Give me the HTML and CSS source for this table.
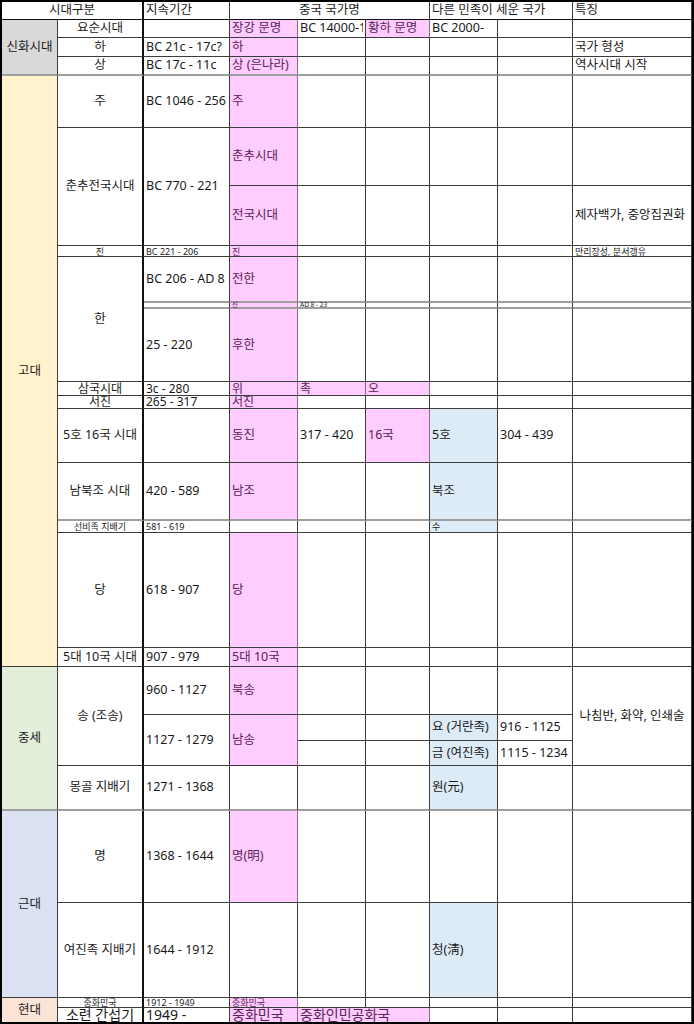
FILE: index.html
```html
<!DOCTYPE html>
<html lang="ko">
<head>
<meta charset="utf-8">
<title>중국 시대구분</title>
<link rel="stylesheet" href="styles.css">
</head>
<body>
<div class="sheet">
  <!-- header -->
  <div class="c hd cs2 ctr k1">시대구분</div>
  <div class="c hd">지속기간</div>
  <div class="c hd cs3 ctr">중국 국가명</div>
  <div class="c hd cs2">다른 민족이 세운 국가</div>
  <div class="c hd">특징</div>

  <!-- row 2 -->
  <div class="c era rs3 gray gb">신화시대</div>
  <div class="c sub">요순시대</div>
  <div class="c"></div>
  <div class="c pk">장강 문명</div>
  <div class="c clip"><span class="cliptext">BC 14000-10000</span></div>
  <div class="c pk">황하 문명</div>
  <div class="c">BC 2000-</div>
  <div class="c"></div>
  <div class="c"></div>

  <!-- row 3 -->
  <div class="c sub">하</div>
  <div class="c">BC 21c - 17c?</div>
  <div class="c pk">하</div>
  <div class="c"></div>
  <div class="c"></div>
  <div class="c"></div>
  <div class="c"></div>
  <div class="c">국가 형성</div>

  <!-- row 4 -->
  <div class="c sub gb">상</div>
  <div class="c gb">BC 17c - 11c</div>
  <div class="c pk gb">상 (은나라)</div>
  <div class="c gb"></div>
  <div class="c gb"></div>
  <div class="c gb"></div>
  <div class="c gb"></div>
  <div class="c gb">역사시대 시작</div>

  <!-- row 5 -->
  <div class="c era rs14 yellow">고대</div>
  <div class="c sub">주</div>
  <div class="c">BC 1046 - 256</div>
  <div class="c pk">주</div>
  <div class="c"></div>
  <div class="c"></div>
  <div class="c"></div>
  <div class="c"></div>
  <div class="c"></div>

  <!-- row 6 -->
  <div class="c sub rs2">춘추전국시대</div>
  <div class="c rs2">BC 770 - 221</div>
  <div class="c pk">춘추시대</div>
  <div class="c"></div>
  <div class="c"></div>
  <div class="c"></div>
  <div class="c"></div>
  <div class="c"></div>

  <!-- row 7 -->
  <div class="c pk">전국시대</div>
  <div class="c"></div>
  <div class="c"></div>
  <div class="c"></div>
  <div class="c"></div>
  <div class="c">제자백가, 중앙집권화</div>

  <!-- row 8 -->
  <div class="c sub sm">진</div>
  <div class="c sm">BC 221 - 206</div>
  <div class="c pk sm">진</div>
  <div class="c"></div>
  <div class="c"></div>
  <div class="c"></div>
  <div class="c"></div>
  <div class="c sm">만리장성, 분서갱유</div>

  <!-- row 9 -->
  <div class="c sub rs3">한</div>
  <div class="c gb">BC 206 - AD 8</div>
  <div class="c pk gb">전한</div>
  <div class="c gb"></div>
  <div class="c gb"></div>
  <div class="c gb"></div>
  <div class="c gb"></div>
  <div class="c gb"></div>

  <!-- row 10 -->
  <div class="c xs gb"></div>
  <div class="c pk xs gb">신</div>
  <div class="c xs gb">AD 8 - 23</div>
  <div class="c gb"></div>
  <div class="c gb"></div>
  <div class="c gb"></div>
  <div class="c gb"></div>

  <!-- row 11 -->
  <div class="c">25 - 220</div>
  <div class="c pk">후한</div>
  <div class="c"></div>
  <div class="c"></div>
  <div class="c"></div>
  <div class="c"></div>
  <div class="c"></div>

  <!-- row 12 -->
  <div class="c sub md">삼국시대</div>
  <div class="c md">3c - 280</div>
  <div class="c pk md">위</div>
  <div class="c pk md">촉</div>
  <div class="c pk md">오</div>
  <div class="c"></div>
  <div class="c"></div>
  <div class="c"></div>

  <!-- row 13 -->
  <div class="c sub md">서진</div>
  <div class="c md">265 - 317</div>
  <div class="c pk md">서진</div>
  <div class="c"></div>
  <div class="c"></div>
  <div class="c"></div>
  <div class="c"></div>
  <div class="c"></div>

  <!-- row 14 -->
  <div class="c sub">5호 16국 시대</div>
  <div class="c"></div>
  <div class="c pk">동진</div>
  <div class="c">317 - 420</div>
  <div class="c pk">16국</div>
  <div class="c bl">5호</div>
  <div class="c">304 - 439</div>
  <div class="c"></div>

  <!-- row 15 -->
  <div class="c sub gb">남북조 시대</div>
  <div class="c gb">420 - 589</div>
  <div class="c pk gb">남조</div>
  <div class="c gb"></div>
  <div class="c gb"></div>
  <div class="c bl gb">북조</div>
  <div class="c gb"></div>
  <div class="c gb"></div>

  <!-- row 16 -->
  <div class="c sub sm">선비족 지배기</div>
  <div class="c sm">581 - 619</div>
  <div class="c"></div>
  <div class="c"></div>
  <div class="c"></div>
  <div class="c bl sm">수</div>
  <div class="c"></div>
  <div class="c"></div>

  <!-- row 17 -->
  <div class="c sub">당</div>
  <div class="c">618 - 907</div>
  <div class="c pk">당</div>
  <div class="c"></div>
  <div class="c"></div>
  <div class="c"></div>
  <div class="c"></div>
  <div class="c"></div>

  <!-- row 18 -->
  <div class="c sub">5대 10국 시대</div>
  <div class="c">907 - 979</div>
  <div class="c pk">5대 10국</div>
  <div class="c"></div>
  <div class="c"></div>
  <div class="c"></div>
  <div class="c"></div>
  <div class="c"></div>

  <!-- row 19 -->
  <div class="c era rs4 green gb">중세</div>
  <div class="c sub rs3">송 (조송)</div>
  <div class="c">960 - 1127</div>
  <div class="c pk">북송</div>
  <div class="c"></div>
  <div class="c"></div>
  <div class="c"></div>
  <div class="c"></div>
  <div class="c rs3 ctr">나침반, 화약, 인쇄술</div>

  <!-- row 20 -->
  <div class="c rs2">1127 - 1279</div>
  <div class="c pk rs2">남송</div>
  <div class="c"></div>
  <div class="c"></div>
  <div class="c bl">요 (거란족)</div>
  <div class="c">916 - 1125</div>

  <!-- row 21 -->
  <div class="c"></div>
  <div class="c"></div>
  <div class="c bl">금 (여진족)</div>
  <div class="c">1115 - 1234</div>

  <!-- row 22 -->
  <div class="c sub gb">몽골 지배기</div>
  <div class="c gb">1271 - 1368</div>
  <div class="c gb"></div>
  <div class="c gb"></div>
  <div class="c gb"></div>
  <div class="c bl gb">원(元)</div>
  <div class="c gb"></div>
  <div class="c gb"></div>

  <!-- row 23 -->
  <div class="c era rs2 blue">근대</div>
  <div class="c sub">명</div>
  <div class="c">1368 - 1644</div>
  <div class="c pk">명(明)</div>
  <div class="c"></div>
  <div class="c"></div>
  <div class="c"></div>
  <div class="c"></div>
  <div class="c"></div>

  <!-- row 24 -->
  <div class="c sub">여진족 지배기</div>
  <div class="c">1644 - 1912</div>
  <div class="c"></div>
  <div class="c"></div>
  <div class="c"></div>
  <div class="c bl">청(淸)</div>
  <div class="c"></div>
  <div class="c"></div>

  <!-- row 25 -->
  <div class="c era rs2 peach last">현대</div>
  <div class="c sub sm">중화민국</div>
  <div class="c sm">1912 - 1949</div>
  <div class="c pk sm">중화민국</div>
  <div class="c"></div>
  <div class="c"></div>
  <div class="c"></div>
  <div class="c"></div>
  <div class="c"></div>

  <!-- row 26 -->
  <div class="c sub lg last">소련 간섭기</div>
  <div class="c lg last">1949 -</div>
  <div class="c pk lg last">중화민국</div>
  <div class="c pk lg cs2 last">중화인민공화국</div>
  <div class="c last"></div>
  <div class="c last"></div>
  <div class="c last"></div>
</div>
</body>
</html>
```

FILE: styles.css
```css
html, body {
  margin: 0;
  padding: 0;
  background: #ffffff;
}

.sheet {
  display: grid;
  box-sizing: border-box;
  width: 694px;
  height: 1024px;
  border: 2px solid #000;
  grid-template-columns: 56px 86px 86px 68px 68px 64px 68px 75px 119px;
  grid-template-rows: 18px 18px 19px 19px 52px 58px 60px 11px 46px 6px 73px 14px 13px 54px 58px 12px 115px 19px 48px 26px 25px 45px 92px 95px 10px 14px;
  font-family: "Noto Sans", "Noto Sans CJK KR", sans-serif;
  font-size: 12.5px;
  color: #1a1a1a;
  background: #fff;
}

.c {
  box-sizing: border-box;
  display: flex;
  align-items: center;
  justify-content: flex-start;
  padding: 0 2px;
  border-right: 1px solid #3c3c3c;
  border-bottom: 1px solid #3c3c3c;
  white-space: nowrap;
  line-height: 1;
  background: #fff;
  min-width: 0;
}

.hd {
  border-bottom: 1px solid #111;
  font-size: 12.5px;
}

.ctr { justify-content: center; }

.cs2 { grid-column: span 2; }
.cs3 { grid-column: span 3; }
.rs2 { grid-row: span 2; }
.rs3 { grid-row: span 3; }
.rs4 { grid-row: span 4; }
.rs14 { grid-row: span 14; }

.era {
  justify-content: center;
  font-size: 12.5px;
}

.k1 { border-right: 2px solid #111; }

.sub {
  justify-content: center;
  border-right: 2px solid #111;
}

.gray { background: #d9d9d9; }
.yellow { background: #fff2cc; }
.green { background: #e2efda; }
.blue { background: #d9e1f2; }
.peach { background: #fce4d6; }

.pk {
  background: #ffccff;
  color: #5a2256;
  border-right-color: #8a6a88;
}

.bl { background: #ddebf7; }

.clip {
  overflow: hidden;
}

.cliptext {
  display: block;
  overflow: hidden;
  width: 100%;
}

.gb { border-bottom: 2px solid #9e9e9e; }

.sm { font-size: 9px; }
.xs { font-size: 6.5px; }
.md { font-size: 12px; }
.lg { font-size: 14px; }

.last { border-bottom: none; }
```
